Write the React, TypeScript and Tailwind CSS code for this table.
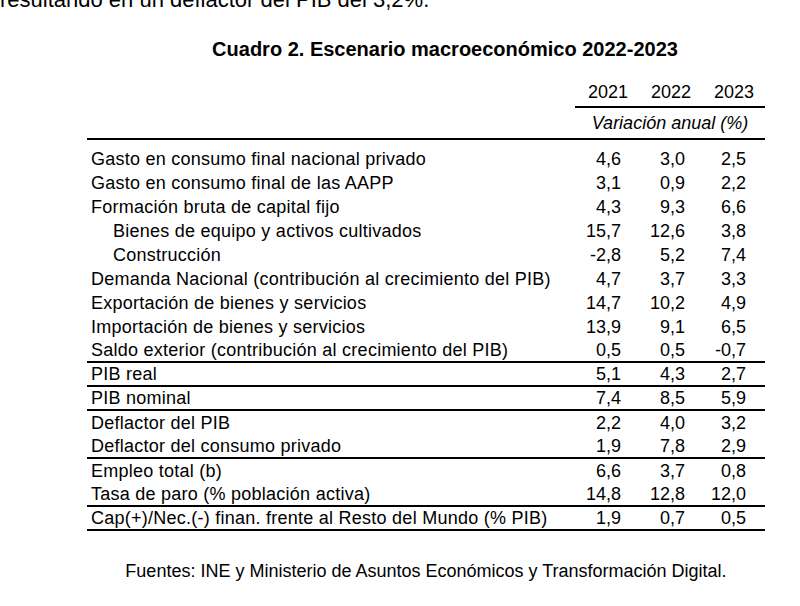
import React from 'react';

type Row = {
  label: string;
  values: [string, string, string];
  indent?: boolean;
  line?: boolean;
};

const rows: Row[] = [
  { label: 'Gasto en consumo final nacional privado', values: ['4,6', '3,0', '2,5'] },
  { label: 'Gasto en consumo final de las AAPP', values: ['3,1', '0,9', '2,2'] },
  { label: 'Formación bruta de capital fijo', values: ['4,3', '9,3', '6,6'] },
  { label: 'Bienes de equipo y activos cultivados', values: ['15,7', '12,6', '3,8'], indent: true },
  { label: 'Construcción', values: ['-2,8', '5,2', '7,4'], indent: true },
  { label: 'Demanda Nacional (contribución al crecimiento del PIB)', values: ['4,7', '3,7', '3,3'] },
  { label: 'Exportación de bienes y servicios', values: ['14,7', '10,2', '4,9'] },
  { label: 'Importación de bienes y servicios', values: ['13,9', '9,1', '6,5'] },
  { label: 'Saldo exterior (contribución al crecimiento del PIB)', values: ['0,5', '0,5', '-0,7'], line: true },
  { label: 'PIB real', values: ['5,1', '4,3', '2,7'], line: true },
  { label: 'PIB nominal', values: ['7,4', '8,5', '5,9'], line: true },
  { label: 'Deflactor del PIB', values: ['2,2', '4,0', '3,2'] },
  { label: 'Deflactor del consumo privado', values: ['1,9', '7,8', '2,9'], line: true },
  { label: 'Empleo total (b)', values: ['6,6', '3,7', '0,8'] },
  { label: 'Tasa de paro (% población activa)', values: ['14,8', '12,8', '12,0'], line: true },
  { label: 'Cap(+)/Nec.(-) finan. frente al Resto del Mundo (% PIB)', values: ['1,9', '0,7', '0,5'], line: true },
];

const App: React.FC = () => {
  return (
    <div
      className="w-[800px] h-[606px] overflow-hidden bg-white text-black"
      style={{ fontFamily: '"Liberation Sans", Arial, sans-serif' }}
    >
      {/* texto del párrafo anterior, cortado arriba */}
      <div className="mt-[-13px] h-[26px] leading-[26px] text-[22px] whitespace-nowrap">
        resultando en un deflactor del PIB del 3,2%.
      </div>

      <div className="mt-[24px] h-[24px] pl-[90px] text-center text-[20px] font-bold leading-[24px]">
        Cuadro 2. Escenario macroeconómico 2022-2023
      </div>

      <div className="ml-[87px] w-[678px] text-[18px]">
        {/* cabecera */}
        <div className="mt-[17px] flex justify-end">
          <div className="flex h-[30px] w-[190px] items-center border-b-2 border-black pl-[1px]">
            <span className="w-[52px] text-right">2021</span>
            <span className="w-[63px] text-right">2022</span>
            <span className="w-[63px] text-right">2023</span>
          </div>
        </div>
        <div className="flex h-[32px] items-center justify-end border-b-2 border-black">
          <span className="w-[190px] text-center italic">Variación anual (%)</span>
        </div>

        <div className="mt-[7px]">
          {rows.map((row, i) => (
            <div
              key={i}
              className={`flex h-[24px] items-center ${row.line ? 'border-b-2 border-black' : ''}`}
            >
              <span
                className={`flex-1 whitespace-nowrap tracking-[0.25px] ${row.indent ? 'pl-[26px]' : 'pl-[4px]'}`}
              >
                {row.label}
              </span>
              <span className="w-[63px] pr-[7px] text-right">{row.values[0]}</span>
              <span className="w-[63px] pr-[6px] text-right">{row.values[1]}</span>
              <span className="w-[63px] pr-[8px] text-right">{row.values[2]}</span>
              <span className="w-[11px]" />
            </div>
          ))}
        </div>

        <div className="mt-[29px] h-[22px] text-center text-[18px] leading-[22px]">
          Fuentes: INE y Ministerio de Asuntos Económicos y Transformación Digital.
        </div>
      </div>
    </div>
  );
};

export default App;
